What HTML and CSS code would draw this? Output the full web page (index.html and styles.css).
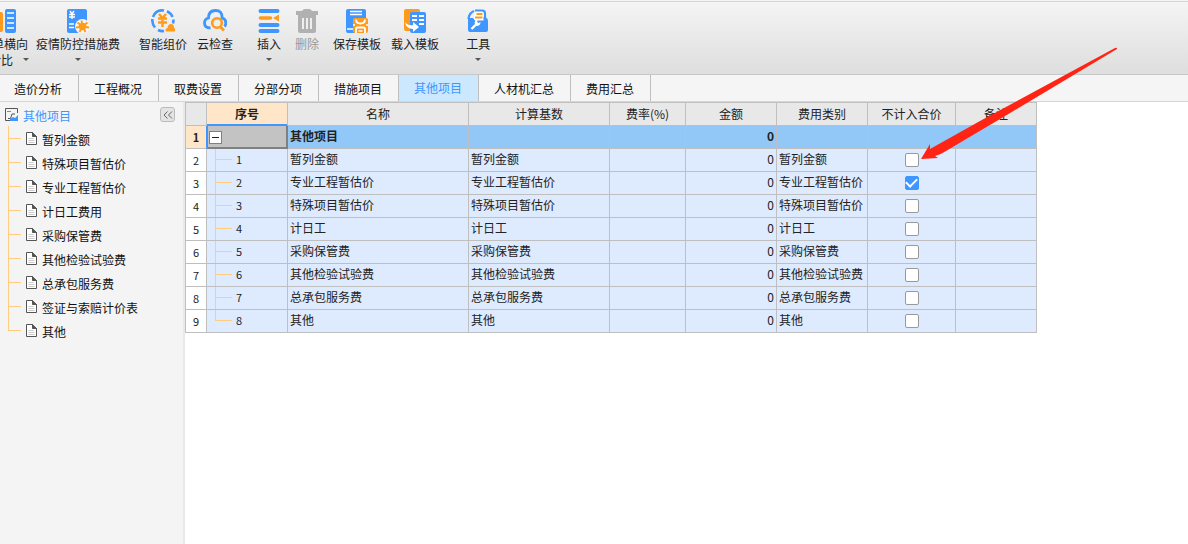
FILE: index.html
```html
<!DOCTYPE html>
<html lang="zh-CN">
<head>
<meta charset="utf-8">
<title>其他项目</title>
<link rel="stylesheet" href="styles.css">
</head>
<body>
<header class="toolbar">
  <div class="group group-first">
    <button class="tool" type="button">
      <svg class="icon" viewBox="0 0 24 24"><rect x="1" y="3" width="10" height="20" rx="2" fill="#ff9b1a"/><rect x="13" y="0" width="11" height="24" rx="2" fill="#4096ff"/><path d="M15 4h7M15 9h7M15 14h7M15 19h7" stroke="#fff" stroke-width="1.500"/></svg>
      <span>清单横向</span>
      <span class="second">对比<i class="caret"></i></span>
    </button>
    <button class="tool" type="button">
      <svg class="icon" viewBox="0 0 24 24"><rect x="1" y="0" width="20" height="24" rx="2" fill="#4096ff"/><path d="M4 2l2 3 2-3M3 5.500h6M3 8h6M6 5v5M3 15h5M3 18.500h5" stroke="#fff" stroke-width="1.400" fill="none"/><circle cx="16.500" cy="17.500" r="7.500" fill="#f4f4f4"/><circle cx="16.500" cy="17.500" r="3.700" fill="#ff9b1a"/><path d="M16.500 17.500l-1-6M16.500 17.500l5-4M16.500 17.500l6.500 1M16.500 17.500l3 5.500M16.500 17.500l-3 5.500M16.500 17.500l-6.500 1M16.500 17.500l-5-4" stroke="#ff9b1a" stroke-width="1.800"/></svg>
      <span>疫情防控措施费</span>
      <i class="caret"></i>
    </button>
  </div>
  <div class="group group-check">
    <button class="tool" type="button">
      <svg class="icon" viewBox="0 0 24 24"><path d="M13 1.600Q5 0 2 8M1.300 10Q1 15 4 18.500M7 21q3 1.500 6 1M16 2.200Q20 4 21.500 8M22.300 10.500q.3 2-.3 4" fill="none" stroke="#4096ff" stroke-width="2.600"/><path d="M8 5l3.500 4L15 5M7 9.500h9M7 13.500h9M11.500 9v9" fill="none" stroke="#ff9b1a" stroke-width="2.400"/><path d="M16 22.500q-1.500 0-1.500-1.500 0-1.500 2-2 .5-4 3.500-4t3 4q1.500.5 1.500 2t-1.500 1.500z" fill="#ff9b1a"/></svg>
      <span>智能组价</span>
    </button>
    <button class="tool" type="button">
      <svg class="icon" viewBox="0 0 24 24"><path d="M7.500 19Q1.500 19 1.500 14 1.500 10 5.500 9 5.500 1.500 12.500 1.500T19 9Q23 10 22.800 14 22.800 16 21.500 17.500" fill="none" stroke="#4096ff" stroke-width="2.800"/><circle cx="14" cy="14" r="4.800" fill="none" stroke="#ff9b1a" stroke-width="2.600"/><path d="M17.500 18l3.500 3.500" stroke="#ff9b1a" stroke-width="2.800"/></svg>
      <span>云检查</span>
    </button>
  </div>
  <div class="group group-edit">
    <button class="tool" type="button">
      <svg class="icon" viewBox="0 0 24 24"><path d="M3.500 2h17M3.500 16h17M3.500 22h17" stroke="#4096ff" stroke-width="4" stroke-linecap="round"/><path d="M3.500 9h10" stroke="#ff9b1a" stroke-width="3.600" stroke-linecap="round"/><path d="M16 9l6-3.500v7z" fill="#ff9b1a"/></svg>
      <span>插入</span>
      <i class="caret"></i>
    </button>
    <button class="tool" type="button" disabled>
      <svg class="icon" viewBox="0 0 24 24"><path d="M1 2h6q1-2 3-2h4q2 0 3 2h6v4H1zM3 6h18v16q0 2-2 2H5q-2 0-2-2z" fill="#b1b1b1"/><path d="M8 9v11M12 9v11M16 9v11" stroke="#f5f5f5" stroke-width="1.800"/></svg>
      <span>删除</span>
    </button>
  </div>
  <div class="group group-template">
    <button class="tool" type="button">
      <svg class="icon" viewBox="0 0 24 24"><path d="M3 0h16q2 0 2 2v8h-9v14H3q-2 0-2-2V2q0-2 2-2z" fill="#4096ff"/><path d="M5 2.500h12M5 5.500h12" stroke="#fff" stroke-width="1.500"/><path d="M2 20h6" stroke="#fff" stroke-width="1.500"/><rect x="8" y="9" width="15" height="15" rx="2" fill="#ff9b1a"/><path d="M11 10.500q0 4 4.500 4t4.500-4M11 24v-4q0-1.500 1.500-1.500h6q1.500 0 1.500 1.500v4" stroke="#fff" stroke-width="1.800" fill="none"/><path d="M8 16h2M21 16h2M13.500 22h4" stroke="#fff" stroke-width="1.400"/></svg>
      <span>保存模板</span>
    </button>
    <button class="tool" type="button">
      <svg class="icon" viewBox="0 0 24 24"><rect x="1" y="0" width="16" height="22" rx="2" fill="#ff9b1a"/><rect x="7" y="3" width="16" height="21" rx="2" fill="#4096ff"/><path d="M9 7h5M16 7h5M9 11h5M16 11h5M16 15h5" stroke="#fff" stroke-width="2"/><path d="M2 13q3 4 8 3v-3l6 5-6 5v-3q-7 0-8-7z" fill="#fff"/></svg>
      <span>载入模板</span>
    </button>
  </div>
  <div class="group">
    <button class="tool" type="button">
      <svg class="icon" viewBox="0 0 24 24"><path d="M8 12V4l3-3h5q3 0 3 3v8" fill="#fff"/><path d="M2.500 10Q3 4 8 2M9 1.500h7q3 0 3 3V9" fill="none" stroke="#4096ff" stroke-width="2.200"/><path d="M10.500 5h6M9 8.500h7.500" stroke="#ff9b1a" stroke-width="1.800"/><path d="M2 9h5l2 2.500h8.500V8H19q3 1 3 4v9q0 2-2 2H4q-2 0-2-2z" fill="#4096ff"/><path d="M5.500 20l5-5" stroke="#fff" stroke-width="2.400"/><path d="M8.500 14l1-3 2.500-.5-1 2.500 1.500 1 2-1q0 4-4 4z" fill="#fff"/></svg>
      <span>工具</span>
      <i class="caret"></i>
    </button>
  </div>
</header>

<nav class="tabs">
  <a class="tab" href="#">造价分析</a>
  <a class="tab" href="#">工程概况</a>
  <a class="tab" href="#">取费设置</a>
  <a class="tab" href="#">分部分项</a>
  <a class="tab" href="#">措施项目</a>
  <a class="tab active" href="#">其他项目</a>
  <a class="tab" href="#">人材机汇总</a>
  <a class="tab" href="#">费用汇总</a>
</nav>

<div class="workspace">
  <aside class="sidebar">
    <div class="side-head">
      <svg class="side-icon" viewBox="0 0 14 14"><path d="M5 12.500H.500V.500h12V5" fill="none" stroke="#555"/><path d="M3 10.500h2.500L7 6h3" fill="none" stroke="#555"/><path d="M2 3.500h4" stroke="#4096ff"/><path d="M5 13v-2l3-2 2 1 3-3v6z" fill="#4096ff"/></svg>
      <span class="side-title">其他项目</span>
      <button class="collapse" type="button" aria-label="收起"><svg viewBox="0 0 10 10"><path d="M4.500 1.500L1 5l3.500 3.500M9 1.500L5.500 5 9 8.500" fill="none" stroke="#666"/></svg></button>
    </div>
    <svg width="0" height="0" class="defs"><symbol id="doc" viewBox="0 0 11 13"><path d="M.500.500h6l4 4v8H.500z" fill="#fff" stroke="#555"/><path d="M6.500.500v4h4z" fill="#555" stroke="#555"/><path d="M2.500 6.500h5M2.500 8.500h6M2.500 10.500h6" stroke="#ccc"/></symbol></svg>
    <ul class="tree">
      <li><svg class="doc"><use href="#doc"/></svg><span>暂列金额</span></li>
      <li><svg class="doc"><use href="#doc"/></svg><span>特殊项目暂估价</span></li>
      <li><svg class="doc"><use href="#doc"/></svg><span>专业工程暂估价</span></li>
      <li><svg class="doc"><use href="#doc"/></svg><span>计日工费用</span></li>
      <li><svg class="doc"><use href="#doc"/></svg><span>采购保管费</span></li>
      <li><svg class="doc"><use href="#doc"/></svg><span>其他检验试验费</span></li>
      <li><svg class="doc"><use href="#doc"/></svg><span>总承包服务费</span></li>
      <li><svg class="doc"><use href="#doc"/></svg><span>签证与索赔计价表</span></li>
      <li><svg class="doc"><use href="#doc"/></svg><span>其他</span></li>
    </ul>
  </aside>

  <main class="content">
    <table class="grid">
      <colgroup><col class="c-row"><col class="c-no"><col class="c-name"><col class="c-base"><col class="c-rate"><col class="c-sum"><col class="c-type"><col class="c-skip"><col class="c-note"></colgroup>
      <thead>
        <tr><th></th><th class="current">序号</th><th>名称</th><th>计算基数</th><th>费率(%)</th><th>金额</th><th>费用类别</th><th>不计入合价</th><th>备注</th></tr>
      </thead>
      <tbody>
        <tr class="total"><th>1</th><td class="focus"><button class="fold" type="button" aria-label="折叠"></button></td><td>其他项目</td><td></td><td></td><td class="num">0</td><td></td><td></td><td></td></tr>
        <tr><th>2</th><td class="no">1</td><td>暂列金额</td><td>暂列金额</td><td></td><td class="num">0</td><td>暂列金额</td><td class="check"><input type="checkbox" aria-label="暂列金额 不计入合价"></td><td></td></tr>
        <tr><th>3</th><td class="no">2</td><td>专业工程暂估价</td><td>专业工程暂估价</td><td></td><td class="num">0</td><td>专业工程暂估价</td><td class="check"><input type="checkbox" checked aria-label="专业工程暂估价 不计入合价"></td><td></td></tr>
        <tr><th>4</th><td class="no">3</td><td>特殊项目暂估价</td><td>特殊项目暂估价</td><td></td><td class="num">0</td><td>特殊项目暂估价</td><td class="check"><input type="checkbox" aria-label="特殊项目暂估价 不计入合价"></td><td></td></tr>
        <tr><th>5</th><td class="no">4</td><td>计日工</td><td>计日工</td><td></td><td class="num">0</td><td>计日工</td><td class="check"><input type="checkbox" aria-label="计日工 不计入合价"></td><td></td></tr>
        <tr><th>6</th><td class="no">5</td><td>采购保管费</td><td>采购保管费</td><td></td><td class="num">0</td><td>采购保管费</td><td class="check"><input type="checkbox" aria-label="采购保管费 不计入合价"></td><td></td></tr>
        <tr><th>7</th><td class="no">6</td><td>其他检验试验费</td><td>其他检验试验费</td><td></td><td class="num">0</td><td>其他检验试验费</td><td class="check"><input type="checkbox" aria-label="其他检验试验费 不计入合价"></td><td></td></tr>
        <tr><th>8</th><td class="no">7</td><td>总承包服务费</td><td>总承包服务费</td><td></td><td class="num">0</td><td>总承包服务费</td><td class="check"><input type="checkbox" aria-label="总承包服务费 不计入合价"></td><td></td></tr>
        <tr><th>9</th><td class="no">8</td><td>其他</td><td>其他</td><td></td><td class="num">0</td><td>其他</td><td class="check"><input type="checkbox" aria-label="其他 不计入合价"></td><td></td></tr>
      </tbody>
    </table>
    <svg class="pointer" viewBox="0 0 198 114"><path d="M1 112L10 97v5L60 74 195 1q2-1 2 1L80 72 26 104q-6 4-11 5l3 2z" fill="#ff2414"/></svg>
  </main>
</div>
</body>
</html>
```

FILE: styles.css
```css
* { box-sizing: border-box; }

body {
  margin: 0;
  min-height: 100vh;
  display: flex;
  flex-direction: column;
  overflow-x: hidden;
  background: #fff;
  color: #222;
  font: 12px/16px "Noto Sans CJK SC", sans-serif;
}

button { font: inherit; color: inherit; }

.toolbar {
  display: flex;
  height: 75px;
  padding-top: 9px;
  border-bottom: 1px solid #c8c8c8;
  background: linear-gradient(#d4d4d4 1px, transparent 1px) 0 1px / 100% 1px no-repeat, linear-gradient(#f5f5f5, #dedede);
}

.group { display: flex; align-items: flex-start; gap: 8px; }
.group-first { gap: 7px; margin-left: -21px; margin-right: 19px; }
.group-check { gap: 10px; margin-right: 24px; }
.group-edit { gap: 14px; margin-right: 14px; }
.group-template { gap: 10px; margin-right: 27px; }

.tool {
  display: flex;
  flex-direction: column;
  align-items: center;
  padding: 0;
  border: 0;
  background: none;
  white-space: nowrap;
}

.tool:disabled { color: #999; }
.icon { width: 24px; height: 24px; margin-bottom: 3px; }
.tool .second { display: flex; gap: 10px; padding-left: 10px; }

.caret {
  width: 6px;
  margin-top: 6px;
  border: solid transparent;
  border-width: 3px 3px 0;
  border-top-color: #555;
}

.second .caret { align-self: flex-start; }

.tabs {
  display: flex;
  border-bottom: 1px solid #d6d6d6;
  background: #f5f5f5;
}

.tab {
  padding: 6px 16px 4px 15px;
  border-right: 1px solid #bfbfbf;
  color: #111;
  line-height: 16px;
  text-decoration: none;
}

.tab:first-child { padding-left: 14px; }
.tab.active { padding-top: 5px; padding-bottom: 5px; background: #cce8ff; color: #4096ff; }

.workspace { flex: 1; display: flex; }

.sidebar {
  flex: 0 0 185px;
  border-right: 2px solid #e9e9e9;
  background: #f4f4f4;
}

.side-head {
  display: flex;
  align-items: center;
  height: 24px;
  padding: 4px 8px 0 5px;
}

.side-icon { width: 14px; height: 14px; margin-bottom: 2px; }
.side-title { flex: 1; margin-left: 4px; color: #4096ff; }

.collapse {
  display: flex;
  align-items: center;
  justify-content: center;
  width: 15px;
  height: 15px;
  margin-bottom: 3px;
  padding: 0;
  border: 1px solid #bbb;
  border-radius: 3px;
  background: #e4e4e4;
}

.collapse svg { flex: none; width: 10px; height: 10px; }
.defs { display: block; }

.tree { margin: 0; padding: 0; list-style: none; }

.tree li {
  display: flex;
  align-items: center;
  height: 24px;
  padding-left: 26px;
  color: #111;
  background:
    linear-gradient(#ffcc80, #ffcc80) 8px 0 / 1px 100% no-repeat,
    linear-gradient(#ffcc80, #ffcc80) 8px 12px / 13px 1px no-repeat;
}

.tree li:last-child {
  background:
    linear-gradient(#ffcc80, #ffcc80) 8px 0 / 1px 12px no-repeat,
    linear-gradient(#ffcc80, #ffcc80) 8px 12px / 13px 1px no-repeat;
}

.doc { width: 11px; height: 13px; margin-right: 5px; }
.tree span { padding-top: 4px; }

.content { position: relative; flex: 1; }

.grid {
  width: 852px;
  table-layout: fixed;
  border-collapse: separate;
  border-spacing: 0;
  border: solid #bfbfbf;
  border-width: 1px 0 0 1px;
}

.c-row { width: 21px; }
.c-no { width: 81px; }
.c-name { width: 181px; }
.c-base { width: 141px; }
.c-rate { width: 76px; }
.c-sum { width: 91px; }
.c-type { width: 91px; }
.c-skip { width: 88px; }
.c-note { width: 81px; }

.grid th, .grid td {
  height: 23px;
  padding: 0 2px;
  border: solid #bfbfbf;
  border-width: 0 1px 1px 0;
  font-weight: 400;
  white-space: nowrap;
}

.grid th { padding: 0; background: #e8e8e8; text-align: center; }
.grid tbody th { background: #fff; font-size: 11px; }
.grid td { padding-bottom: 2px; background: #deeafe; }
.grid .num { text-align: right; }

.grid th.current, .grid .total th { background: #ffe6c8; font-weight: 700; }
.grid th.current { border-bottom-color: #4096ff; box-shadow: inset 0 -1px #4096ff; }
.grid .total td { background: #92c8f7; font-weight: 700; }

.grid .total td.focus {
  padding: 0 2px;
  border-color: #808080;
  background: #c3c3c3;
  box-shadow: inset 1px 0 #4096ff, inset -1px -1px #808080;
}

.grid .total th { border-right-color: #4096ff; }

.fold {
  display: block;
  width: 13px;
  height: 13px;
  padding: 0;
  border: 1px solid #808080;
  background: linear-gradient(#222, #222) center / 7px 1px no-repeat #fff;
}

.grid .no {
  padding-left: 29px;
  font-size: 11px;
  background:
    linear-gradient(#ffcc80, #ffcc80) 8px 0 / 1px 100% no-repeat,
    linear-gradient(#ffcc80, #ffcc80) 8px 10px / 17px 1px no-repeat,
    #deeafe;
}

.grid tr:last-child .no {
  background:
    linear-gradient(#ffcc80, #ffcc80) 8px 0 / 1px 10px no-repeat,
    linear-gradient(#ffcc80, #ffcc80) 8px 10px / 17px 1px no-repeat,
    #deeafe;
}

.grid .check { padding-bottom: 0; }

.check input {
  display: block;
  appearance: none;
  width: 14px;
  height: 14px;
  margin: 0 auto;
  border: 1px solid #999;
  border-radius: 2px;
  background: #fff;
}

.check input:checked {
  display: grid;
  place-items: center;
  border-color: #4096ff;
  background: #4096ff;
}

.check input:checked::before {
  content: "";
  width: 9px;
  height: 5px;
  margin-bottom: 3px;
  border: solid #fff;
  border-width: 0 0 2px 2px;
  transform: rotate(-45deg);
}

.pointer {
  position: absolute;
  top: -55px;
  left: 735px;
  width: 198px;
  height: 114px;
  pointer-events: none;
}
```
